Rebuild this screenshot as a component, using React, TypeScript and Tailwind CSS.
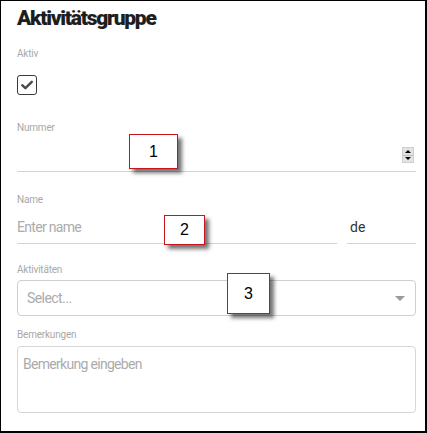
import React from "react";

const font = { fontFamily: "Roboto, 'Noto Sans', sans-serif" };

function Label({ children, className = "" }: { children: React.ReactNode; className?: string }) {
  return (
    <div className={`h-[12px] text-[10px] leading-[12px] text-[#a8a8a8] tracking-[-0.02em] ${className}`}>
      {children}
    </div>
  );
}

function Callout({ n, className }: { n: string; className: string }) {
  return (
    <div
      className={`absolute flex items-center justify-center bg-white border-[1.5px] border-[#c8141e] shadow-[4px_4px_4px_rgba(0,0,0,0.55)] text-[16px] text-black ${className}`}
      style={{ fontFamily: "'Liberation Sans', Arial, sans-serif" }}
    >
      {n}
    </div>
  );
}

export default function App() {
  return (
    <div
      className="relative w-[427px] h-[433px] bg-white border-t border-l border-r-2 border-b-2 border-black pl-[16px] pr-[9px] pt-[5px] pb-[18px] flex flex-col"
      style={font}
    >
      <div className="h-[24px] text-[21px] leading-[24px] font-black text-[#1e1e1e] tracking-[-0.06em]">
        Aktivitätsgruppe
      </div>

      <Label className="mt-[18px]">Aktiv</Label>
      <div className="mt-[15px] w-[20px] h-[20px] rounded-[3px] border-[1.5px] border-[#3a3a3a] flex items-center justify-center">
        <svg width="14" height="14" viewBox="0 0 14 14">
          <path d="M2.2 7.2 L5.4 10.2 L11.8 3.8" fill="none" stroke="#4a4a4a" strokeWidth="2.4" strokeLinecap="round" strokeLinejoin="round" />
        </svg>
      </div>

      <Label className="mt-[27px]">Nummer</Label>
      <div className="h-[38px] border-b border-[#d2d2d2] flex items-end justify-end pb-[8px] pr-[2px]">
        <div className="w-[12px] h-[16px] bg-[#e3e3e3] border border-[#cfcfcf] flex flex-col">
          <div className="flex-1 flex items-center justify-center border-b border-[#bdbdbd]">
            <div className="w-0 h-0 border-l-[3px] border-r-[3px] border-b-[3px] border-l-transparent border-r-transparent border-b-black" />
          </div>
          <div className="flex-1 flex items-center justify-center">
            <div className="w-0 h-0 border-l-[3px] border-r-[3px] border-t-[3px] border-l-transparent border-r-transparent border-t-black" />
          </div>
        </div>
      </div>

      <Label className="mt-[22px]">Name</Label>
      <div className="flex gap-[10px] h-[38px]">
        <div className="flex-1 border-b border-[#d2d2d2] flex items-end pb-[6px] text-[14px] leading-[20px] text-[#ababab] tracking-[-0.05em]">
          Enter name
        </div>
        <div className="w-[69px] border-b border-[#d2d2d2] flex items-end pb-[6px] pl-[3px] text-[14px] leading-[20px] text-[#333]">
          de
        </div>
      </div>

      <Label className="mt-[20px]">Aktivitäten</Label>
      <div className="mt-[4px] h-[36px] rounded-[4px] border border-[#cfcfcf] flex items-center justify-between pl-[9px] pr-[10px]">
        <span className="text-[14px] leading-[20px] text-[#ababab] tracking-[-0.04em]">Select...</span>
        <div className="w-0 h-0 border-l-[5px] border-r-[5px] border-t-[5px] border-l-transparent border-r-transparent border-t-[#9a9a9a]" />
      </div>

      <Label className="mt-[13px]">Bemerkungen</Label>
      <div className="mt-[5px] h-[67px] rounded-[4px] border border-[#d6d6d6] pl-[5px] pt-[5px]">
        <span className="text-[14px] leading-[20px] text-[#ababab] tracking-[-0.05em]">Bemerkung eingeben</span>
      </div>

      <Callout n="1" className="left-[128px] top-[133px] w-[49px] h-[35px]" />
      <Callout n="2" className="left-[163px] top-[214px] w-[41px] h-[30px]" />
      <Callout n="3" className="left-[226px] top-[272px] w-[43px] h-[41px]" />
    </div>
  );
}
